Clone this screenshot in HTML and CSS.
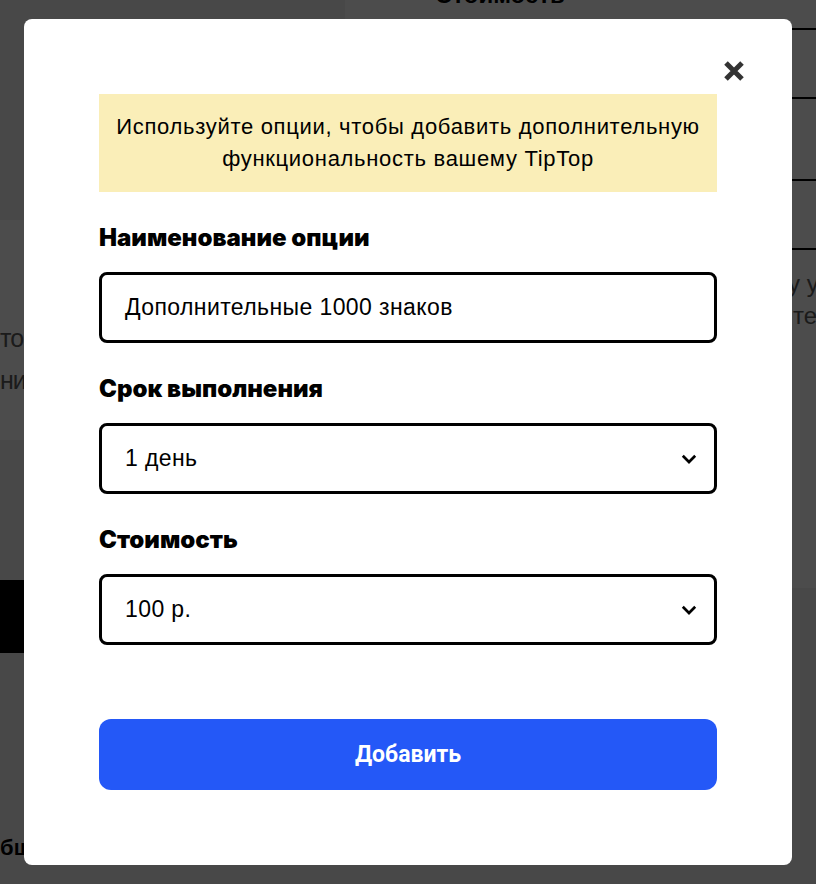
FILE: index.html
```html
<!DOCTYPE html>
<html lang="ru">
<head>
	<meta charset="utf-8">
	<title>Добавить опцию</title>
	<link rel="stylesheet" href="styles.css">
</head>
<body>

	<div class="page">
		<div class="page_left">
			<div class="page_card">
				<p>топ заказов</p>
				<p>ники авторов</p>
			</div>
			<div class="page_btn"></div>
			<h3 class="page_title">Общая стоимость</h3>
		</div>
		<div class="page_right">
			<h2 class="page_heading">Стоимость</h2>
			<div class="page_table">
				<div class="page_row"></div>
				<div class="page_row page_row_big"></div>
				<div class="page_row"></div>
			</div>
			<p class="page_text">у уже готового</p>
			<p class="page_text page_text_next">текста</p>
		</div>
	</div>

	<div class="overlay">
		<div class="modal">
			<button class="modal_close" aria-label="Закрыть">
				<svg width="22" height="22" viewBox="0 0 22 22"><path d="M3 3 L19 19 M19 3 L3 19" stroke="#333" stroke-width="5" fill="none"/></svg>
			</button>

			<div class="notice">Используйте опции, чтобы добавить дополнительную функциональность вашему TipTop</div>

			<div class="field">
				<div class="field_label">Наименование опции</div>
				<div class="field_box">Дополнительные 1000 знаков</div>
			</div>

			<div class="field">
				<div class="field_label">Срок выполнения</div>
				<div class="field_box field_select">
					<span>1 день</span>
					<svg width="16" height="10" viewBox="0 0 16 10"><polyline points="1.8,1.8 8,8 14.2,1.8" stroke="#000" stroke-width="2.7" fill="none"/></svg>
				</div>
			</div>

			<div class="field">
				<div class="field_label">Стоимость</div>
				<div class="field_box field_select">
					<span>100 р.</span>
					<svg width="16" height="10" viewBox="0 0 16 10"><polyline points="1.8,1.8 8,8 14.2,1.8" stroke="#000" stroke-width="2.7" fill="none"/></svg>
				</div>
			</div>

			<button class="btn_add">Добавить</button>
		</div>
	</div>

</body>
</html>
```

FILE: styles.css
```css
body {
	margin: 0;
	font-family: "Liberation Sans", Arial, sans-serif;
	color: #000;
	background: #f0f0f0;
}

/* page under the modal */
.page {
	display: grid;
	grid-template-columns: 345px 1fr;
	height: 884px;
	overflow: hidden;
}
.page_left {
	padding-top: 220px;
}
.page_card {
	background: #fff;
	height: 220px;
	padding: 104px 0 0 0;
	box-sizing: border-box;
}
.page_card p {
	margin: 0 0 14px 0;
	font-size: 25px;
	line-height: 28px;
	color: #5a5a5a;
	white-space: nowrap;
	letter-spacing: -1px;
}
.page_btn {
	margin-top: 140px;
	height: 73px;
	background: #000;
}
.page_title {
	margin: 180px 0 0 0;
	font-size: 22px;
	line-height: 30px;
	text-indent: -17px;
	white-space: nowrap;
}
.page_right {
	background: #fff;
	height: 610px;
	margin-top: -22px;
}
.page_heading {
	margin: 0;
	padding-left: 90px;
	font-size: 24px;
	line-height: 34px;
}
.page_table {
	margin-top: 16px;
	margin-left: 400px;
}
.page_row {
	height: 67px;
	border-top: 2px solid #000;
}
.page_row_big {
	height: 80px;
}
.page_row:last-child {
	border-bottom: 2px solid #000;
}
.page_text {
	margin: 20px 0 0 0;
	padding-left: 443px;
	font-size: 24px;
	line-height: 28px;
	color: #5a5a5a;
	white-space: nowrap;
}
.page_text_next {
	margin-top: 4px;
	padding-left: 448px;
}

/* modal */
.overlay {
	position: fixed;
	inset: 0;
	background: rgba(0, 0, 0, 0.7);
	padding: 19px 24px;
	display: flex;
}
.modal {
	position: relative;
	flex: 1;
	background: #fff;
	border-radius: 8px;
	padding: 75px;
	display: flex;
	flex-direction: column;
}
.modal_close {
	position: absolute;
	top: 41px;
	right: 47px;
	width: 22px;
	height: 22px;
	padding: 0;
	border: none;
	background: none;
	cursor: pointer;
}
.modal_close svg {
	display: block;
}

.notice {
	background: #faeeb8;
	padding: 17px 8px;
	text-align: center;
	font-size: 22px;
	line-height: 32px;
	letter-spacing: 0.7px;
}

.field {
	margin-top: 31px;
}
.field_label {
	font-family: Inter, "Liberation Sans", sans-serif;
	font-weight: 900;
	font-size: 24px;
	line-height: 30px;
	margin-bottom: 19px;
}
.field_box {
	height: 71px;
	box-sizing: border-box;
	border: 3px solid #000;
	border-radius: 8px;
	padding: 0 17px 0 23px;
	display: flex;
	align-items: center;
	font-size: 23px;
	letter-spacing: 0.4px;
}
.field_select {
	justify-content: space-between;
}

.btn_add {
	margin-top: 74px;
	height: 73px;
	border: none;
	border-radius: 12px;
	background: #2458f7;
	color: #fff;
	font-family: Roboto, "Liberation Sans", sans-serif;
	font-weight: bold;
	font-size: 23px;
	cursor: pointer;
}
```
